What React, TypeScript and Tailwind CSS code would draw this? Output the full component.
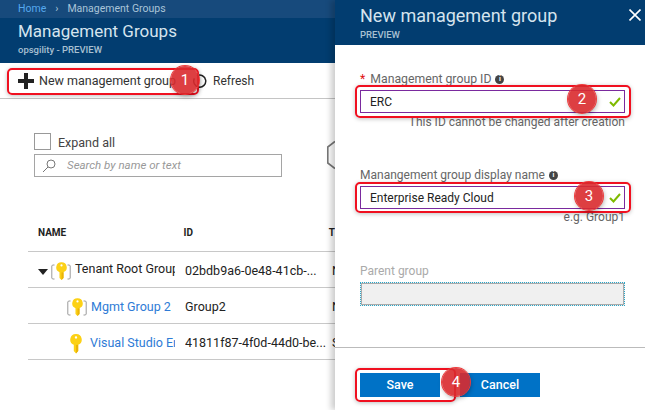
const font = "font-['Roboto','Open_Sans',sans-serif]";

function Key({ className }: { className?: string }) {
  return (
    <svg viewBox="0 0 12 20" className={className}>
      <path d="M6 0a5.6 5.6 0 0 1 2.2 10.8V17L6 19.4 3.8 17v-6.2A5.6 5.6 0 0 1 6 0z" fill="#fcd116" />
      <path d="M6 2.2a1.2 1.2 0 1 0 0 2.4 1.2 1.2 0 0 0 0-2.4z" fill="#fff" />
      <path d="M8.2 10.8V17L6 19.4V11z" fill="#eab308" />
    </svg>
  );
}

function GroupKey() {
  return (
    <span className="relative flex h-[20px] w-[20px] shrink-0 items-center justify-center">
      <svg viewBox="0 0 20 18" className="absolute inset-0 h-[20px] w-[20px]" fill="none" stroke="#9a9a9a" strokeWidth="1">
        <path d="M3.5 2H1.5L.8 3v12l.7 1h2M16.5 2h2l.7 1v12l-.7 1h-2" />
      </svg>
      <Key className="relative h-[19px] w-[11px]" />
    </span>
  );
}

function Badge({ n, className }: { n: number; className: string }) {
  return (
    <div className={`absolute z-40 flex h-[28px] w-[28px] items-center justify-center rounded-full bg-[#d92a2e]/90 text-[15px] text-white shadow-[0_0_0_1px_#ef3b3b,1px_2px_5px_rgba(0,0,0,0.35)] ${className}`}>
      {n}
    </div>
  );
}

function Ring({ className }: { className: string }) {
  return <div className={`pointer-events-none absolute z-30 rounded-[5px] border-2 border-[#f01020] shadow-[0_1px_4px_rgba(0,0,0,0.25)] ${className}`} />;
}

function Row({ icon, name, id, extra, link, indent, nameClass }: { icon: React.ReactNode; name: string; id: string; extra: string; link?: boolean; indent: string; nameClass?: string }) {
  return (
    <div className="flex h-[36px] items-center border-b border-[#c8c8c8] pt-[4px] text-[12.5px] text-[#222]">
      <div className={`mr-[10px] flex w-[147px] shrink-0 items-center overflow-hidden whitespace-nowrap ${indent}`}>
        {icon}
        <span className={`${link ? "ml-[4px] text-[#2e7bd6]" : "ml-[4px]"} ${nameClass || ""}`}>{name}</span>
      </div>
      <div className="w-[147px] shrink-0 overflow-hidden whitespace-nowrap">{id}</div>
      <div>{extra}</div>
    </div>
  );
}

function Info() {
  return (
    <span className="ml-[4px] flex h-[9px] w-[9px] items-center justify-center rounded-full bg-[#444] text-[7px] font-bold leading-none text-white">i</span>
  );
}

function Field({ value }: { value: string }) {
  return (
    <div className="mt-[2px] flex h-[23px] items-center justify-between border border-[#7a2a9e] pl-[9px] pr-[3px] text-[12px] text-[#222]">
      {value}
      <svg viewBox="0 0 12 10" className="h-[10px] w-[12px]" fill="none" stroke="#7fba00" strokeWidth="2">
        <path d="M1 5l3.5 3.5L11 1" />
      </svg>
    </div>
  );
}

export default function App() {
  return (
    <div className={`relative flex h-[410px] w-[645px] overflow-hidden bg-white ${font}`}>
      {/* blade behind */}
      <div className="flex w-[335px] shrink-0 flex-col">
        <div className="flex h-[18px] items-center gap-[9px] bg-[#174a7c] pl-[18px] text-[10.5px] text-[#a9c4d8]">
          <span className="text-[#55a8ee]">Home</span>
          <span>›</span>
          <span>Management Groups</span>
        </div>
        <div className="flex h-[45px] flex-col bg-[#023d70] pl-[18px]">
          <div className="text-[17px] leading-[26px] text-[#d5e4ee]">Management Groups</div>
          <div className="text-[9.5px] font-medium leading-[12px] text-[#a9c0d2]">opsgility - PREVIEW</div>
        </div>
        <div className="flex h-[36px] items-center border-b border-[#c4c4c4] pl-[18px] pt-[1px] text-[12.5px] text-[#333]">
          <svg viewBox="0 0 16 16" className="h-[16px] w-[16px]" fill="#222">
            <path d="M6 0h4v6h6v4h-6v6H6v-6H0V6h6z" />
          </svg>
          <span className="ml-[5px] w-[154px] whitespace-nowrap">New management group</span>
          <svg viewBox="0 0 14 14" className="h-[14px] w-[14px]" fill="none" stroke="#222" strokeWidth="1.5">
            <path d="M4 1.8a6 6 0 1 1-2.6 2.6" />
          </svg>
          <span className="ml-[6px] text-[12px]">Refresh</span>
        </div>

        <div className="relative flex flex-1 flex-col">
          <div className="ml-[34px] mt-[34px] flex h-[17px] items-center gap-[7px] text-[12.5px] text-[#444]">
            <div className="h-[17px] w-[17px] border border-[#999]" />
            <span className="mt-[3px]">Expand all</span>
          </div>
          <div className="ml-[34px] mt-[4px] flex h-[23px] w-[248px] items-center border border-[#a5a5a5] pl-[7px] text-[11.5px] italic text-[#999]">
            <svg viewBox="0 0 14 14" className="h-[14px] w-[14px]" fill="none" stroke="#777" strokeWidth="1">
              <circle cx="9" cy="5" r="4" />
              <path d="M6 8l-5 5" />
            </svg>
            <span className="ml-[11px]">Search by name or text</span>
          </div>
          <svg viewBox="0 0 10 36" className="absolute left-[327px] top-[38px] h-[36px] w-[8px]" fill="none" stroke="#777" strokeWidth="2">
            <path d="M10 1L1 8v20l9 7" />
          </svg>

          <div className="ml-[28px] mt-[46px]">
            <div className="flex h-[29px] items-center border-b border-[#c8c8c8] pb-[9px] text-[10px] font-bold text-[#222]">
              <div className="mr-[10px] w-[147px] pl-[10px]">NAME</div>
              <div className="w-[147px]">ID</div>
              <div>T</div>
            </div>
            <Row
              indent="pl-[10px]"
              name="Tenant Root Group"
              nameClass="mb-[4px]"
              id="02bdb9a6-0e48-41cb-..."
              extra="N"
              icon={
                <>
                  <svg viewBox="0 0 10 6" className="mr-[3px] h-[6px] w-[10px] shrink-0" fill="#222">
                    <path d="M0 0h10L5 6z" />
                  </svg>
                  <GroupKey />
                </>
              }
            />
            <Row indent="pl-[39px]" link name="Mgmt Group 2" id="Group2" extra="N" icon={<GroupKey />} />
            <Row indent="pl-[42px]" link name="Visual Studio Enterprise" id="41811f87-4f0d-44d0-be..." extra="S" icon={<Key className="mr-[4px] h-[20px] w-[12px] shrink-0" />} />
          </div>
        </div>
      </div>

      {/* new management group blade */}
      <div className="relative z-10 flex flex-1 flex-col bg-white shadow-[-4px_0_6px_rgba(0,0,0,0.2)]">
        <div className="relative h-[45px] bg-[#023d70] pl-[25px]">
          <div className="pt-[2px] text-[18px] leading-[27px] text-[#d5e4ee]">New management group</div>
          <div className="text-[9.5px] font-medium leading-[12px] text-[#a9c0d2]">PREVIEW</div>
          <svg viewBox="0 0 12 12" className="absolute right-[4px] top-[9px] h-[12px] w-[12px]" stroke="#fff" strokeWidth="1.6">
            <path d="M.5.5l11 11M11.5.5l-11 11" />
          </svg>
        </div>

        <div className="flex flex-1 flex-col pl-[25px] pr-[20px] text-[12px]">
          <div className="mt-[25px] flex h-[18px] items-center text-[12.25px] text-[#666]">
            <span className="mr-[5px] text-[#e01010]">*</span>
            Management group ID
            <Info />
          </div>
          <Field value="ERC" />
          <div className="mt-[1px] text-right leading-[16px] text-[#666]">This ID cannot be changed after creation</div>

          <div className="mt-[36px] flex h-[18px] items-center text-[#666]">
            Manangement group display name
            <Info />
          </div>
          <Field value="Enterprise Ready Cloud" />
          <div className="text-right leading-[16px] text-[#666]">e.g. Group1</div>

          <div className="mt-[37px] flex h-[18px] items-center text-[#aaa]">Parent group</div>
          <div className="mt-[2px] h-[24px] border border-dotted border-[#2aa7c9] bg-[#f0f0f0] shadow-[inset_0_0_0_1px_#aaa]" />
        </div>

        <div className="flex h-[63px] items-start gap-[20px] border-t border-[#bbb] pl-[25px] pt-[25px] text-[12.5px] font-medium text-white">
          <div className="flex h-[24px] w-[80px] items-center justify-center bg-[#0072c6]">Save</div>
          <div className="flex h-[24px] w-[80px] items-center justify-center bg-[#0072c6]">Cancel</div>
        </div>
      </div>

      {/* annotations */}
      <Ring className="left-[7px] top-[68px] h-[27px] w-[192px]" />
      <Ring className="left-[355px] top-[85px] h-[33px] w-[276px]" />
      <Ring className="left-[355px] top-[182px] h-[31px] w-[276px]" />
      <Ring className="left-[355px] top-[368px] h-[34px] w-[101px]" />
      <Badge n={1} className="left-[171px] top-[66px]" />
      <Badge n={2} className="left-[568px] top-[85px]" />
      <Badge n={3} className="left-[575px] top-[182px]" />
      <Badge n={4} className="left-[442px] top-[368px]" />
    </div>
  );
}
